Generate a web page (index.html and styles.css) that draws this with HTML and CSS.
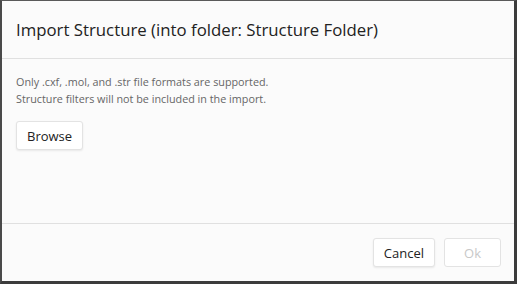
FILE: index.html
```html
<!DOCTYPE html>
<html lang="en">
<head>
  <meta charset="UTF-8">
  <title>Import Structure</title>
  <link rel="stylesheet" href="styles.css">
</head>
<body>
  <!-- Import dialog -->
  <div class="dialog">
    <div class="dialog-header">
      <h1>Import Structure (into folder: Structure Folder)</h1>
    </div>
    <div class="dialog-body">
      <p>Only .cxf, .mol, and .str file formats are supported.<br>
        Structure filters will not be included in the import.</p>
      <button class="button">Browse</button>
    </div>
    <div class="dialog-footer">
      <button class="button">Cancel</button>
      <button class="button" disabled>Ok</button>
    </div>
  </div>
</body>
</html>
```

FILE: styles.css
```css
* {
  margin: 0;
  padding: 0;
  box-sizing: border-box;
  font-family: "Open Sans", sans-serif;
}

body {
  background-color: #fff;
  width: 517px;
  height: 284px;
  overflow: hidden;
}

/* Dialog frame */
.dialog {
  width: 517px;
  height: 284px;
  background-color: #fbfbfb;
  border-top: 1px solid #5a5a5a;
  border-left: 2px solid #4a4a4a;
  border-right: 3px solid #3c3c3c;
  border-bottom: 3px solid #3c3c3c;
  display: flex;
  flex-direction: column;
}

.dialog-header {
  height: 58px;
  padding: 0 14px;
  display: flex;
  align-items: center;
  border-bottom: 1px solid #e0e0e0;
}

h1 {
  font-size: 16.8px;
  font-weight: 400;
  color: #222;
}

.dialog-body {
  flex: 1;
  padding: 14px 14px;
  border-bottom: 1px solid #e0e0e0;
}

p {
  font-size: 10.8px;
  line-height: 17px;
  color: #666;
  margin-bottom: 14px;
}

.button {
  font-size: 13px;
  color: #222;
  background-color: #fff;
  border: 1px solid #e3e3e3;
  border-radius: 3px;
  box-shadow: 0 1px 2px rgba(0, 0, 0, 0.08);
  height: 29px;
  padding: 0 10px;
  cursor: pointer;
}

.button:disabled {
  color: #c8c8c8;
  box-shadow: none;
  cursor: default;
  padding: 0 19px;
}

.dialog-footer {
  height: 57px;
  padding: 0 13px;
  display: flex;
  justify-content: flex-end;
  align-items: center;
  gap: 9px;
}
```
